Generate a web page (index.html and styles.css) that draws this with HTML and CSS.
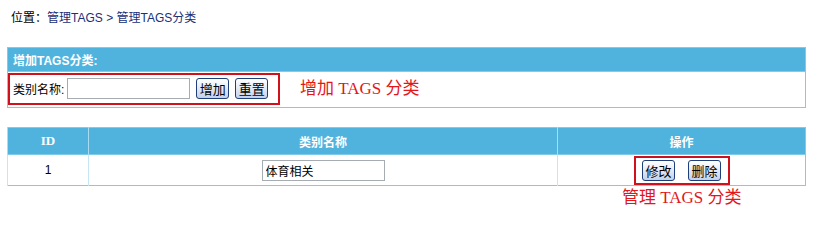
FILE: index.html
```html
<!DOCTYPE html>
<html lang="zh-CN">
<head>
<meta charset="utf-8">
<title>管理TAGS分类</title>
<link rel="stylesheet" href="styles.css">
</head>
<body>
<div class="crumb">位置：<span class="link">管理TAGS</span> <span class="link">&gt;</span> <span class="link">管理TAGS分类</span></div>

<table class="panel add">
  <tr><th class="title">增加TAGS分类:</th></tr>
  <tr>
    <td class="addcell">
      <div class="addrow">
        <div class="mark form">
          <span class="label">类别名称:</span>
          <input class="txt" type="text">
          <button class="btn">增加</button>
          <button class="btn">重置</button>
        </div>
        <span class="note">增加 TAGS 分类</span>
      </div>
    </td>
  </tr>
</table>

<div class="listwrap">
<table class="panel list">
  <tr>
    <th class="c-id serif">ID</th>
    <th class="c-name">类别名称</th>
    <th class="c-op">操作</th>
  </tr>
  <tr>
    <td class="c-id">1</td>
    <td class="c-name"><input class="txt" type="text" value="体育相关"></td>
    <td class="c-op">
      <div class="mark ops">
        <button class="btn">修改</button>
        <button class="btn">删除</button>
      </div>
    </td>
  </tr>
</table>
<span class="note note2">管理 TAGS 分类</span>
</div>
</body>
</html>
```
FILE: styles.css
```css
html, body {
  margin: 0;
  padding: 0;
  background: #fff;
}
body {
  font-family: "Liberation Sans", "Noto Sans CJK SC", sans-serif;
  font-size: 12px;
  color: #000;
  width: 822px;
  height: 250px;
  overflow: hidden;
}
.crumb {
  padding: 11px 0 0 11px;
  height: 36px;
  line-height: 14px;
}
.crumb .link { color: #1b2f78; }

.panel {
  border-collapse: collapse;
  margin-left: 7px;
  width: 799px;
  border: 1px solid #7fcbea;
}
.panel th {
  background: #50b3de;
  color: #fff;
  font-weight: bold;
  font-size: 12px;
  padding: 0;
}
.add th.title {
  text-align: left;
  height: 23px;
  padding-left: 5px;
  border-bottom: 1px solid #7fcbea;
}
.addcell {
  padding: 0 0 2px 0;
  height: 33px;
}
.addrow {
  display: flex;
  align-items: center;
}
.mark {
  border: 2px solid #d0111b;
  box-sizing: border-box;
  display: flex;
  align-items: center;
}
.form {
  width: 272px;
  height: 32px;
  padding-left: 3px;
}
.label { margin-right: 3px; }
.txt {
  box-sizing: border-box;
  width: 123px;
  height: 21px;
  border: 1px solid #a5acb2;
  padding: 1px 3px;
  margin: 0;
  font-family: "Noto Sans CJK SC", sans-serif;
  font-size: 12px;
  background: #fff;
}
.btn {
  box-sizing: border-box;
  height: 21px;
  width: 33px;
  padding: 0;
  margin: 0 0 0 6px;
  font-family: "Noto Sans CJK SC", sans-serif;
  font-size: 13px;
  line-height: 17px;
  color: #000;
  border: 1px solid #1f3f7a;
  border-radius: 3px;
  background: linear-gradient(#ffffff, #e8eef8 40%, #c2d1ec);
}
.note {
  font-family: "Liberation Serif", "Noto Sans CJK SC", serif;
  font-size: 17px;
  color: #e3171b;
  margin-left: 20px;
  line-height: 20px;
}

.listwrap {
  position: relative;
  margin-top: 19px;
}
.list th {
  height: 26px;
  border-left: 1px solid #a9dcf1;
}
.list th.serif {
  font-family: "Liberation Serif", serif;
  font-size: 13px;
}
.list td {
  height: 30px;
  padding: 0;
  text-align: center;
  border-left: 1px solid #c6e6f4;
  border-top: 1px solid #7fcbea;
}
.c-id { width: 80px; }
.c-name { width: 468px; }
.list td.c-name .txt { vertical-align: middle; }
.ops {
  display: inline-flex;
  width: 96px;
  height: 29px;
  justify-content: center;
  gap: 13px;
  vertical-align: middle;
}
.ops .btn { margin: 0; }
.note2 {
  position: absolute;
  left: 602px;
  top: 61px;
}
```
